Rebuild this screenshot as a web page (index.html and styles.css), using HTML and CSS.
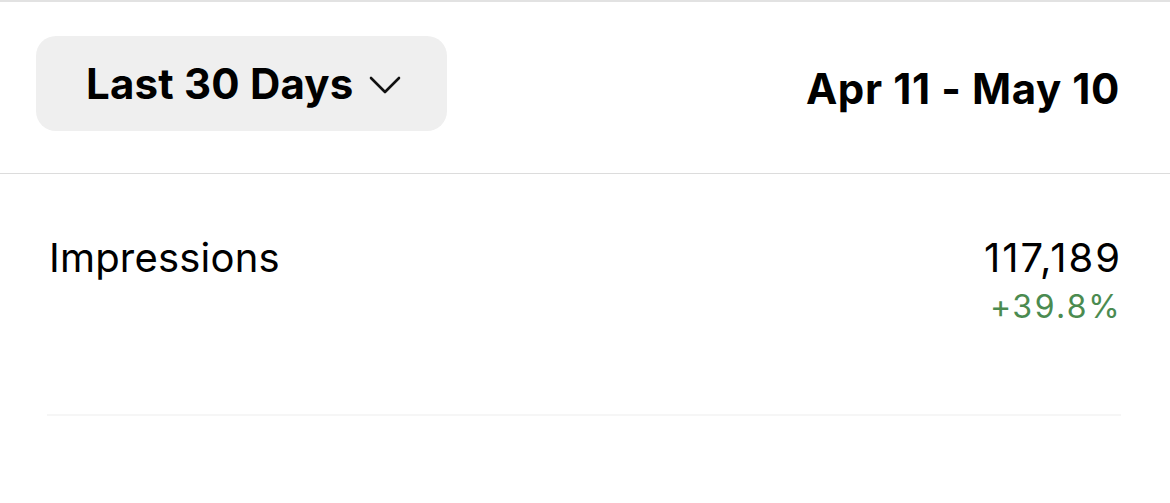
FILE: index.html
```html
<!DOCTYPE html>
<html>
<head>
<meta charset="utf-8">
<link rel="stylesheet" href="styles.css">
</head>
<body>
<div class="page">
  <header class="header">
    <button class="range">
      <span class="range-label">Last 30 Days</span>
      <svg class="chev" width="32" height="18" viewBox="0 0 32 18"><path d="M2 2 L16 16 L30 2" fill="none" stroke="#111" stroke-width="2.6" stroke-linecap="round" stroke-linejoin="round"/></svg>
    </button>
    <div class="dates">Apr 11 - May 10</div>
  </header>
  <section class="metric">
    <div class="metric-name">Impressions</div>
    <div class="metric-values">
      <div class="metric-value">117,189</div>
      <div class="metric-change">+39.8%</div>
    </div>
  </section>
  <div class="faint-rule"></div>
</div>
</body>
</html>
```
FILE: styles.css
```css
html, body {
  margin: 0;
  padding: 0;
  background: #fff;
}
.page {
  width: 1170px;
  height: 503px;
  border-top: 2px solid #e2e2e2;
  box-sizing: border-box;
  font-family: Inter, "Noto Sans", sans-serif;
  color: #000;
  overflow: hidden;
}
.header {
  display: flex;
  justify-content: space-between;
  align-items: center;
  padding: 34px 50px 42px 36px;
  border-bottom: 1px solid #dcdcdc;
}
.range {
  display: flex;
  align-items: center;
  gap: 15px;
  width: 411px;
  height: 95px;
  box-sizing: border-box;
  padding: 0 0 0 50px;
  background: #efefef;
  border: none;
  border-radius: 20px;
  font-family: inherit;
  color: #000;
}
.range-label {
  font-size: 42px;
  font-weight: 700;
  letter-spacing: 0.2px;
}
.chev {
  display: block;
  margin-top: 2px;
}
.dates {
  font-size: 42px;
  font-weight: 700;
  letter-spacing: 0.6px;
  padding-top: 10px;
}
.metric {
  display: flex;
  justify-content: space-between;
  align-items: flex-start;
  padding: 60px 50px 0 49px;
  height: 180px;
  box-sizing: border-box;
}
.metric-name {
  font-size: 40px;
  font-weight: 400;
  line-height: 48px;
  letter-spacing: 0.2px;
}
.metric-values {
  text-align: right;
}
.metric-value {
  font-size: 40px;
  line-height: 48px;
  letter-spacing: 2px;
  margin-right: -2px;
}
.metric-change {
  margin-top: 10px;
  margin-right: -1px;
  font-size: 32px;
  line-height: 30px;
  color: #4b8b50;
  font-variant-numeric: tabular-nums;
  letter-spacing: 1.3px;
}
.faint-rule {
  margin: 60px 49px 0 47px;
  height: 2px;
  background: #f6f6f6;
}
```
